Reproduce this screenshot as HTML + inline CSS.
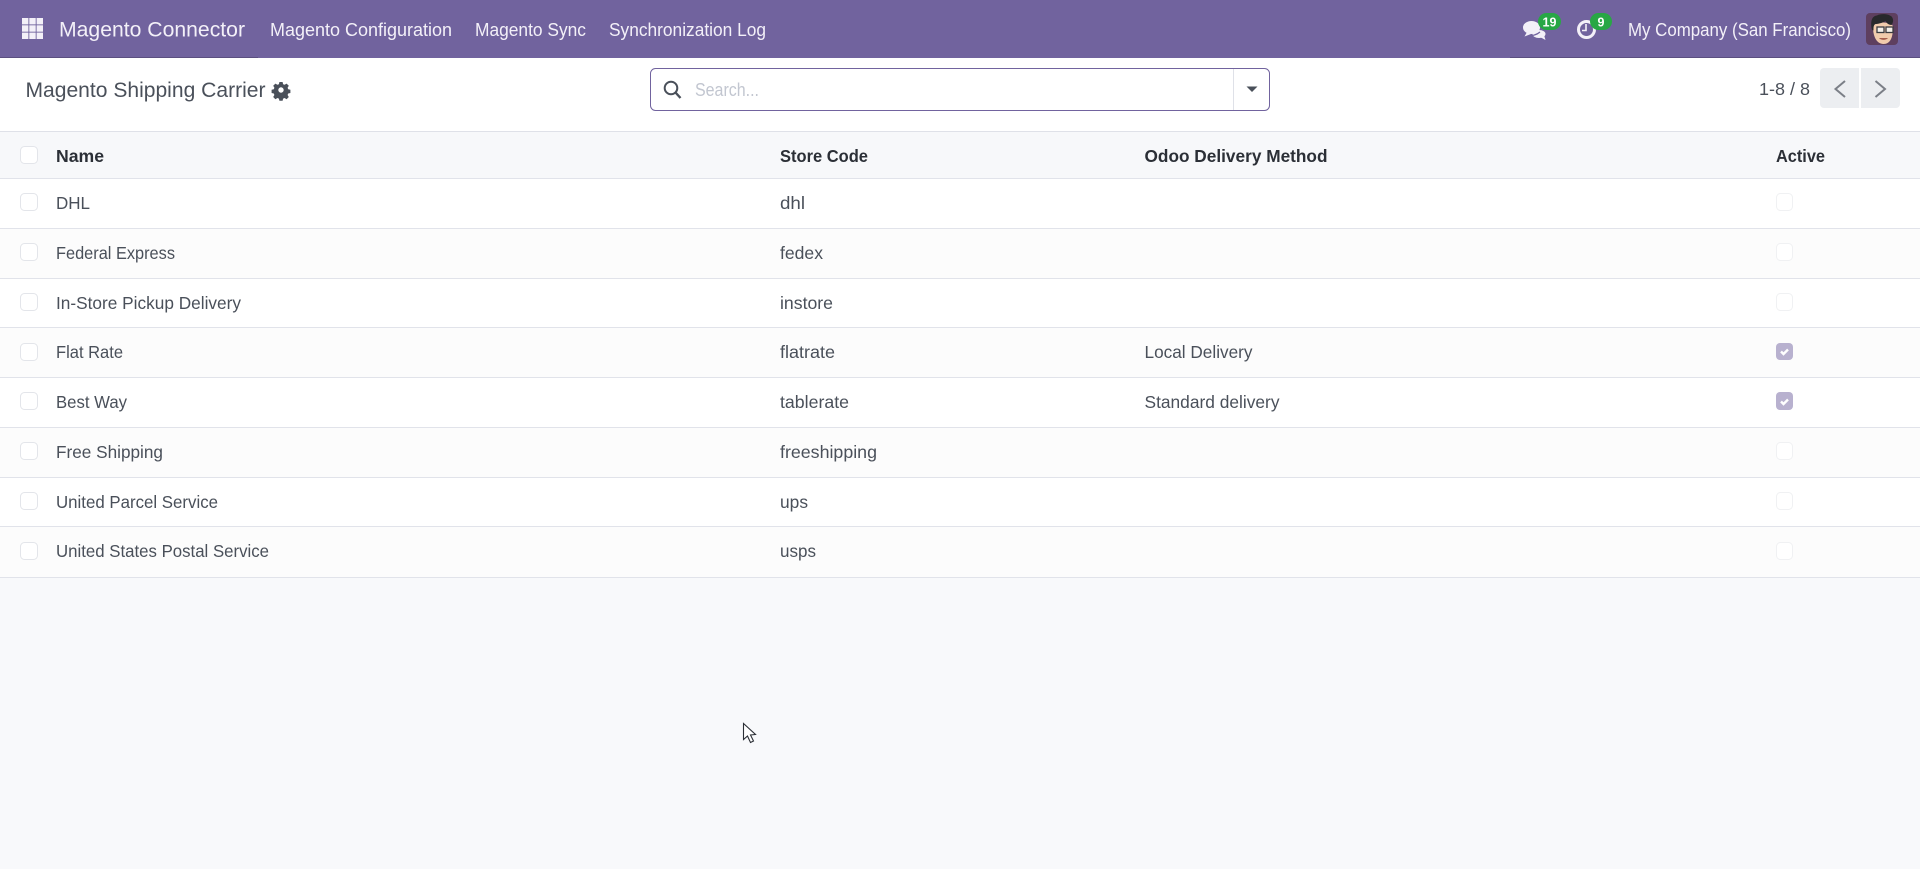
<!DOCTYPE html>
<html><head><meta charset="utf-8"><title>Magento Shipping Carrier</title>
<style>
html,body{margin:0;padding:0;width:1920px;height:869px;overflow:hidden;background:#f8f9fb}
svg{position:absolute;left:0;top:0;display:block}
text{font-family:"Liberation Sans",sans-serif}
.n{font-size:18px;fill:#f3f0f8}
.h{font-size:17.5px;font-weight:bold;fill:#2b2f36}
.r{font-size:17.5px;fill:#4a505a}
</style></head><body>
<svg width="1920" height="869" viewBox="0 0 1920 869" xmlns="http://www.w3.org/2000/svg">
<rect width="1920" height="869" fill="#f8f9fb"/>
<rect width="1920" height="58" fill="#71639e"/>
<rect y="57" width="258" height="1" fill="#5b4f80"/>
<rect x="1510" y="57" width="410" height="1" fill="#5b4f80"/>
<rect y="58" width="1920" height="73" fill="#fff"/>
<rect y="131" width="1920" height="1" fill="#dfe1e8"/>
<g fill="#f3f0f8">
<rect x="22" y="18" width="6.4" height="6.4"/><rect x="29.3" y="18" width="6.4" height="6.4"/><rect x="36.6" y="18" width="6.4" height="6.4"/>
<rect x="22" y="25.3" width="6.4" height="6.4"/><rect x="29.3" y="25.3" width="6.4" height="6.4"/><rect x="36.6" y="25.3" width="6.4" height="6.4"/>
<rect x="22" y="32.6" width="6.4" height="6.4"/><rect x="29.3" y="32.6" width="6.4" height="6.4"/><rect x="36.6" y="32.6" width="6.4" height="6.4"/>
</g>
<text x="59" y="36.500" font-size="21" fill="#f3f0f8" textLength="186" lengthAdjust="spacingAndGlyphs">Magento Connector</text>
<text class="n" x="270" y="36" textLength="182" lengthAdjust="spacingAndGlyphs">Magento Configuration</text>
<text class="n" x="475" y="36" textLength="111" lengthAdjust="spacingAndGlyphs">Magento Sync</text>
<text class="n" x="609" y="36" textLength="157" lengthAdjust="spacingAndGlyphs">Synchronization Log</text>
<!-- chat icon -->
<g fill="#f3f0f8">
<ellipse cx="1539" cy="34" rx="6.500" ry="4"/>
<path d="M1540 37l5.500 3-1.500-5z"/>
</g>
<path d="M1527 36c4 0 9-.5 13-4" fill="none" stroke="#71639e" stroke-width="1.200"/>
<g fill="#f3f0f8">
<ellipse cx="1531.500" cy="27.500" rx="8.500" ry="6.500"/>
<path d="M1527 32l-2.500 4.500 6.500-2.500z"/>
</g>
<rect x="1538" y="13" width="23" height="17" rx="8.500" fill="#28a745"/>
<text x="1549.500" y="26.500" font-size="12.500" font-weight="bold" fill="#fff" text-anchor="middle">19</text>
<!-- clock icon -->
<circle cx="1586.500" cy="29.500" r="8" fill="none" stroke="#f3f0f8" stroke-width="3"/>
<path d="M1586 24v6.500h-4" fill="none" stroke="#f3f0f8" stroke-width="1.600"/>
<rect x="1590" y="13" width="22" height="17" rx="8.500" fill="#28a745"/>
<text x="1601" y="26.500" font-size="12.500" font-weight="bold" fill="#fff" text-anchor="middle">9</text>
<text class="n" x="1628" y="36" textLength="223" lengthAdjust="spacingAndGlyphs">My Company (San Francisco)</text>
<!-- avatar -->
<rect x="1866" y="13" width="32" height="32" rx="4" fill="#5e3f5f"/>
<path d="M1873 27c0 10 4 17 10.500 17s9.500-6 9.500-17c0-6-20-6-20 0z" fill="#f2cbac"/>
<path d="M1872 30c-2-9 0-14 5-14.500 3-2 12-2 15 1.500 2 3 1 6-.5 8-3 0-5-2-6-4-3 2-8 3-10 3-2 1-2 3-2 6.500z" fill="#28292c"/>
<rect x="1877" y="27" width="7" height="5.500" fill="#f5efe8" stroke="#3a3b40" stroke-width="1.300"/>
<rect x="1886" y="27" width="7" height="5.500" fill="#f5efe8" stroke="#3a3b40" stroke-width="1.300"/>
<path d="M1879 38c2 2.500 7 2.500 9 0z" fill="#a55d4c"/>
<!-- breadcrumb -->
<text x="25.500" y="97" font-size="21" fill="#4a505a" textLength="240" lengthAdjust="spacingAndGlyphs">Magento Shipping Carrier</text>
<g transform="translate(281 90)" fill="#4a505a">
<path fill-rule="evenodd" d="M-1.600-8h3.200l.5 2.200 1.500.6 2-1.200 2.200 2.200-1.200 2 .6 1.500 2.200.5v3.200l-2.200.5-.6 1.500 1.200 2-2.200 2.200-2-1.200-1.500.6-.5 2.200h-3.200l-.5-2.200-1.500-.6-2 1.200-2.200-2.200 1.200-2-.6-1.500-2.200-.5v-3.200l2.200-.5.6-1.500-1.200-2 2.200-2.200 2 1.200 1.500-.6zM0-2.700a2.700 2.700 0 1 0 0 5.400 2.700 2.700 0 0 0 0-5.400z"/>
</g>
<!-- search -->
<rect x="650.500" y="68.500" width="619" height="42" rx="5" fill="#fff" stroke="#71639e"/>
<rect x="1233" y="69" width="1" height="41" fill="#dfe1e8"/>
<circle cx="671" cy="88" r="6.300" fill="none" stroke="#4a505a" stroke-width="2"/>
<path d="M675.500 92.500l5 5.500" stroke="#4a505a" stroke-width="2.400" fill="none"/>
<text x="695" y="96" font-size="18" fill="#c2c6d0" textLength="64" lengthAdjust="spacingAndGlyphs">Search...</text>
<path d="M1246.500 86.500h11l-5.500 5.500z" fill="#4a505a"/>
<!-- pager -->
<text x="1759" y="95" font-size="17.500" fill="#4a505a" textLength="51" lengthAdjust="spacingAndGlyphs">1-8 / 8</text>
<path d="M1824 68h35v40h-35a4 4 0 0 1-4-4v-32a4 4 0 0 1 4-4z" fill="#eceef1"/>
<path d="M1861 68h35a4 4 0 0 1 4 4v32a4 4 0 0 1-4 4h-35z" fill="#eceef1"/>
<path d="M1845 81l-9.500 8 9.500 8" fill="none" stroke="#7b7f87" stroke-width="2"/>
<path d="M1875.500 81l9.500 8-9.500 8" fill="none" stroke="#7b7f87" stroke-width="2"/>
<!-- table -->
<rect y="132" width="1920" height="46" fill="#f7f8fa"/>
<rect y="178" width="1920" height="50" fill="#fff"/>
<rect y="228" width="1920" height="50" fill="#fcfcfc"/>
<rect y="278" width="1920" height="49" fill="#fff"/>
<rect y="327" width="1920" height="50" fill="#fcfcfc"/>
<rect y="377" width="1920" height="50" fill="#fff"/>
<rect y="427" width="1920" height="50" fill="#fcfcfc"/>
<rect y="477" width="1920" height="49" fill="#fff"/>
<rect y="526" width="1920" height="51" fill="#fcfcfc"/>
<g fill="#e1e3ea">
<rect y="178" width="1920" height="1"/><rect y="228" width="1920" height="1"/><rect y="278" width="1920" height="1"/><rect y="327" width="1920" height="1"/><rect y="377" width="1920" height="1"/><rect y="427" width="1920" height="1"/><rect y="477" width="1920" height="1"/><rect y="526" width="1920" height="1"/><rect y="577" width="1920" height="1"/>
</g>
<text class="h" x="56" y="162" textLength="48" lengthAdjust="spacingAndGlyphs">Name</text>
<text class="h" x="780" y="162" textLength="88" lengthAdjust="spacingAndGlyphs">Store Code</text>
<text class="h" x="1144.500" y="162" textLength="183" lengthAdjust="spacingAndGlyphs">Odoo Delivery Method</text>
<text class="h" x="1776" y="162" textLength="49" lengthAdjust="spacingAndGlyphs">Active</text>
<g fill="#fff" stroke="#e3e5ea">
<rect x="20.500" y="146.500" width="17" height="17" rx="4"/>
<rect x="20.500" y="193.500" width="17" height="17" rx="4"/>
<rect x="20.500" y="243.500" width="17" height="17" rx="4"/>
<rect x="20.500" y="293.500" width="17" height="17" rx="4"/>
<rect x="20.500" y="343.500" width="17" height="17" rx="4"/>
<rect x="20.500" y="392.500" width="17" height="17" rx="4"/>
<rect x="20.500" y="442.500" width="17" height="17" rx="4"/>
<rect x="20.500" y="492.500" width="17" height="17" rx="4"/>
<rect x="20.500" y="542.500" width="17" height="17" rx="4"/>
</g>
<g fill="#fff" stroke="#f0f1f3">
<rect x="1776.500" y="193.500" width="16" height="17" rx="4"/>
<rect x="1776.500" y="243.500" width="16" height="17" rx="4"/>
<rect x="1776.500" y="293.500" width="16" height="17" rx="4"/>
<rect x="1776.500" y="442.500" width="16" height="17" rx="4"/>
<rect x="1776.500" y="492.500" width="16" height="17" rx="4"/>
<rect x="1776.500" y="542.500" width="16" height="17" rx="4"/>
</g>
<rect x="1776" y="343" width="17" height="17" rx="4" fill="#b8b1cf"/>
<rect x="1776" y="392" width="17" height="18" rx="4" fill="#b8b1cf"/>
<path d="M1781 351.500l2.500 2.500 4.500-4.500" fill="none" stroke="#fff" stroke-width="2.400"/>
<path d="M1781 401.500l2.500 2.500 4.500-4.500" fill="none" stroke="#fff" stroke-width="2.400"/>
<text class="r" x="56" y="209" textLength="34" lengthAdjust="spacingAndGlyphs">DHL</text>
<text class="r" x="56" y="259" textLength="119" lengthAdjust="spacingAndGlyphs">Federal Express</text>
<text class="r" x="56" y="309" textLength="185" lengthAdjust="spacingAndGlyphs">In-Store Pickup Delivery</text>
<text class="r" x="56" y="358" textLength="67" lengthAdjust="spacingAndGlyphs">Flat Rate</text>
<text class="r" x="56" y="408" textLength="71" lengthAdjust="spacingAndGlyphs">Best Way</text>
<text class="r" x="56" y="458" textLength="107" lengthAdjust="spacingAndGlyphs">Free Shipping</text>
<text class="r" x="56" y="508" textLength="162" lengthAdjust="spacingAndGlyphs">United Parcel Service</text>
<text class="r" x="56" y="557" textLength="213" lengthAdjust="spacingAndGlyphs">United States Postal Service</text>
<text class="r" x="780" y="209" textLength="25" lengthAdjust="spacingAndGlyphs">dhl</text>
<text class="r" x="780" y="259" textLength="43" lengthAdjust="spacingAndGlyphs">fedex</text>
<text class="r" x="780" y="309" textLength="53" lengthAdjust="spacingAndGlyphs">instore</text>
<text class="r" x="780" y="358" textLength="55" lengthAdjust="spacingAndGlyphs">flatrate</text>
<text class="r" x="780" y="408" textLength="69" lengthAdjust="spacingAndGlyphs">tablerate</text>
<text class="r" x="780" y="458" textLength="97" lengthAdjust="spacingAndGlyphs">freeshipping</text>
<text class="r" x="780" y="508" textLength="28" lengthAdjust="spacingAndGlyphs">ups</text>
<text class="r" x="780" y="557" textLength="36" lengthAdjust="spacingAndGlyphs">usps</text>
<text class="r" x="1144.500" y="358" textLength="108" lengthAdjust="spacingAndGlyphs">Local Delivery</text>
<text class="r" x="1144.500" y="408" textLength="135" lengthAdjust="spacingAndGlyphs">Standard delivery</text>
<path d="M743.500 723.500v16l4-3.500 3 6.500 3-1.500-3-6 5-.5z" fill="#fff" stroke="#2b2f36" stroke-width="1.100"/>
</svg>
</body></html>
